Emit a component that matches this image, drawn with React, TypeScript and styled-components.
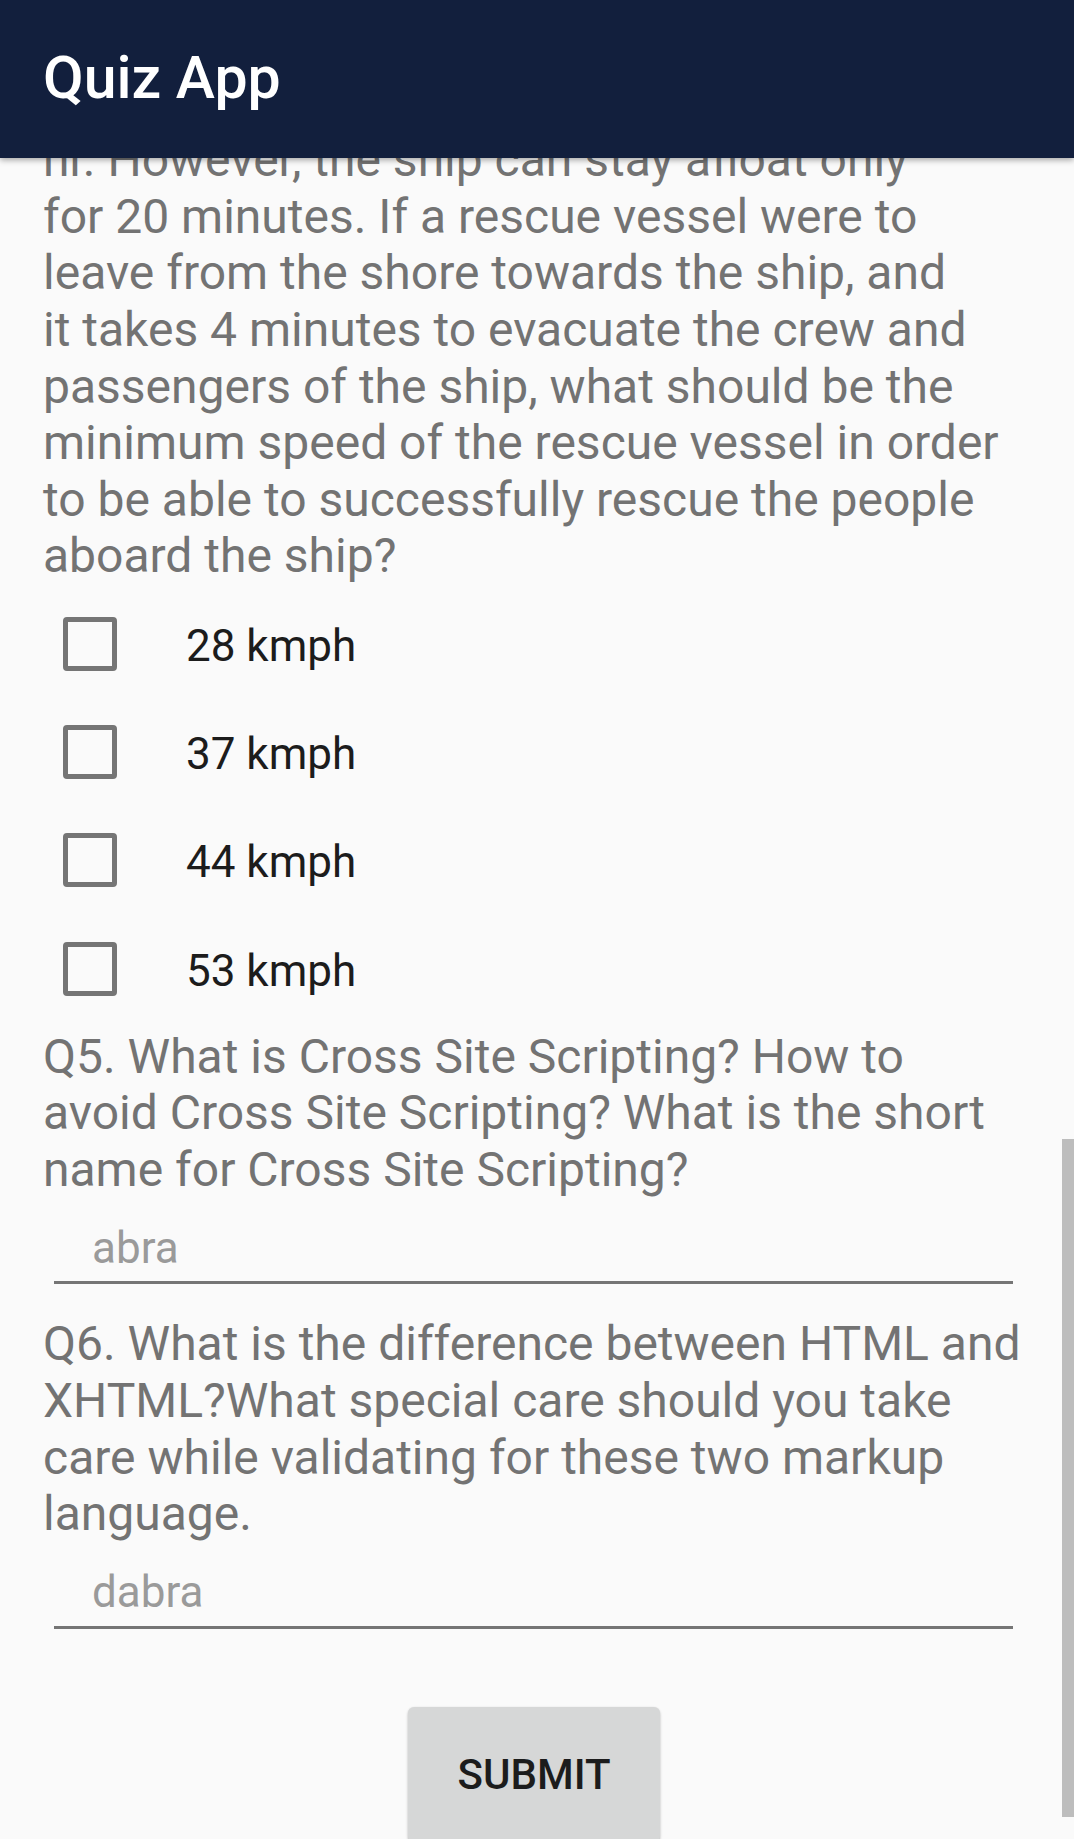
import React from "react";
import styled, { createGlobalStyle } from "styled-components";

const Global = createGlobalStyle`
  html, body {
    margin: 0;
    padding: 0;
    background: #fafafa;
  }
  body {
    font-family: Roboto, "Noto Sans", "Liberation Sans", sans-serif;
  }
  * { box-sizing: border-box; }
`;

const Screen = styled.div`
  display: flex;
  flex-direction: column;
  height: 100vh;
  background: #fafafa;
  overflow: hidden;
`;

const AppBar = styled.header`
  position: relative;
  z-index: 2;
  flex: 0 0 158px;
  display: flex;
  align-items: center;
  padding: 0 0 4px 43px;
  background: #121f3d;
  box-shadow: 0 2px 6px rgba(0, 0, 0, 0.35);
`;

const Title = styled.h1`
  margin: 0;
  font-family: Roboto, sans-serif;
  font-weight: 500;
  font-size: 59px;
  color: #ffffff;
`;

const ScrollArea = styled.div`
  position: relative;
  flex: 1 1 auto;
  min-height: 0;
`;

const Scroller = styled.main`
  height: 100%;
  overflow-y: auto;
  scrollbar-width: none;
  &::-webkit-scrollbar {
    display: none;
  }
`;

const ScrollThumb = styled.div`
  position: absolute;
  right: 0;
  top: 981px;
  width: 12px;
  height: 678px;
  background: #bdbdbd;
`;

const Content = styled.div`
  display: flex;
  flex-direction: column;
  padding: 16px 49px 56px 43px;
`;

const Question = styled.p<{ $gapBefore?: number }>`
  margin: ${(p) => p.$gapBefore ?? 0}px 0 0 0;
  font-size: 48px;
  line-height: 56.6px;
  color: #737373;
  white-space: nowrap;
`;

const Options = styled.div`
  display: flex;
  flex-direction: column;
  margin-top: 5px;
`;

const OptionRow = styled.label`
  display: flex;
  align-items: center;
  height: 108.2px;
  padding-left: 20px;
  gap: 69px;
  cursor: pointer;
`;

const Box = styled.input.attrs({ type: "checkbox" })`
  appearance: none;
  -webkit-appearance: none;
  margin: 0;
  flex: 0 0 54px;
  width: 54px;
  height: 54px;
  border: 5px solid #757575;
  border-radius: 4px;
  background: transparent;
`;

const OptionText = styled.span`
  font-size: 44px;
  padding-top: 4px;
  color: #1c1c1c;
`;

const AnswerField = styled.input`
  display: block;
  width: calc(100% - 23px);
  height: 70px;
  margin: 16px 12px 0 11px;
  padding: 0 0 0 38px;
  border: none;
  border-bottom: 3px solid #757575;
  background: transparent;
  font-family: Roboto, sans-serif;
  font-size: 44px;
  color: #9a9a9a;
  outline: none;
`;

const ButtonRow = styled.div`
  display: flex;
  justify-content: center;
  margin-top: 78px;
`;

const SubmitButton = styled.button`
  width: 252px;
  height: 135px;
  border: none;
  border-radius: 6px;
  background: #d6d7d7;
  box-shadow: 0 2px 3px rgba(0, 0, 0, 0.22), 0 0 2px rgba(0, 0, 0, 0.08);
  font-family: Roboto, sans-serif;
  font-weight: 500;
  font-size: 42px;
  color: #1c1c1c;
  cursor: pointer;
`;

const Lines: React.FC<{ lines: string[] }> = ({ lines }) => (
  <>
    {lines.map((l, i) => (
      <React.Fragment key={i}>
        {l}
        {i < lines.length - 1 && <br />}
      </React.Fragment>
    ))}
  </>
);

const q4 = [
  "Q4. A ship is 12 km away from the shore and",
  "is drifting towards the shore at a speed of 4 km/",
  "hr. However, the ship can stay afloat only",
  "for 20 minutes. If a rescue vessel were to",
  "leave from the shore towards the ship, and",
  "it takes 4 minutes to evacuate the crew and",
  "passengers of the ship, what should be the",
  "minimum speed of the rescue vessel in order",
  "to be able to successfully rescue the people",
  "aboard the ship?",
];

const q5 = [
  "Q5. What is Cross Site Scripting? How to",
  "avoid Cross Site Scripting? What is the short",
  "name for Cross Site Scripting?",
];

const q6 = [
  "Q6. What is the difference between HTML and",
  "XHTML?What special care should you take",
  "care while validating for these two markup",
  "language.",
];

const options = ["28 kmph", "37 kmph", "44 kmph", "53 kmph"];

export default function App() {
  const setScroll = (el: HTMLElement | null) => {
    if (el) el.scrollTop = 16 + 2 * 56.6 + 26;
  };

  return (
    <>
      <Global />
      <Screen>
        <AppBar>
          <Title>Quiz App</Title>
        </AppBar>
        <ScrollArea>
          <Scroller ref={setScroll}>
            <Content>
              <Question>
                <Lines lines={q4} />
              </Question>
              <Options>
                {options.map((o) => (
                  <OptionRow key={o}>
                    <Box />
                    <OptionText>{o}</OptionText>
                  </OptionRow>
                ))}
              </Options>
              <Question $gapBefore={6}>
                <Lines lines={q5} />
              </Question>
              <AnswerField defaultValue="abra" />
              <Question $gapBefore={32}>
                <Lines lines={q6} />
              </Question>
              <AnswerField defaultValue="dabra" />
              <ButtonRow>
                <SubmitButton>SUBMIT</SubmitButton>
              </ButtonRow>
            </Content>
          </Scroller>
          <ScrollThumb />
        </ScrollArea>
      </Screen>
    </>
  );
}
